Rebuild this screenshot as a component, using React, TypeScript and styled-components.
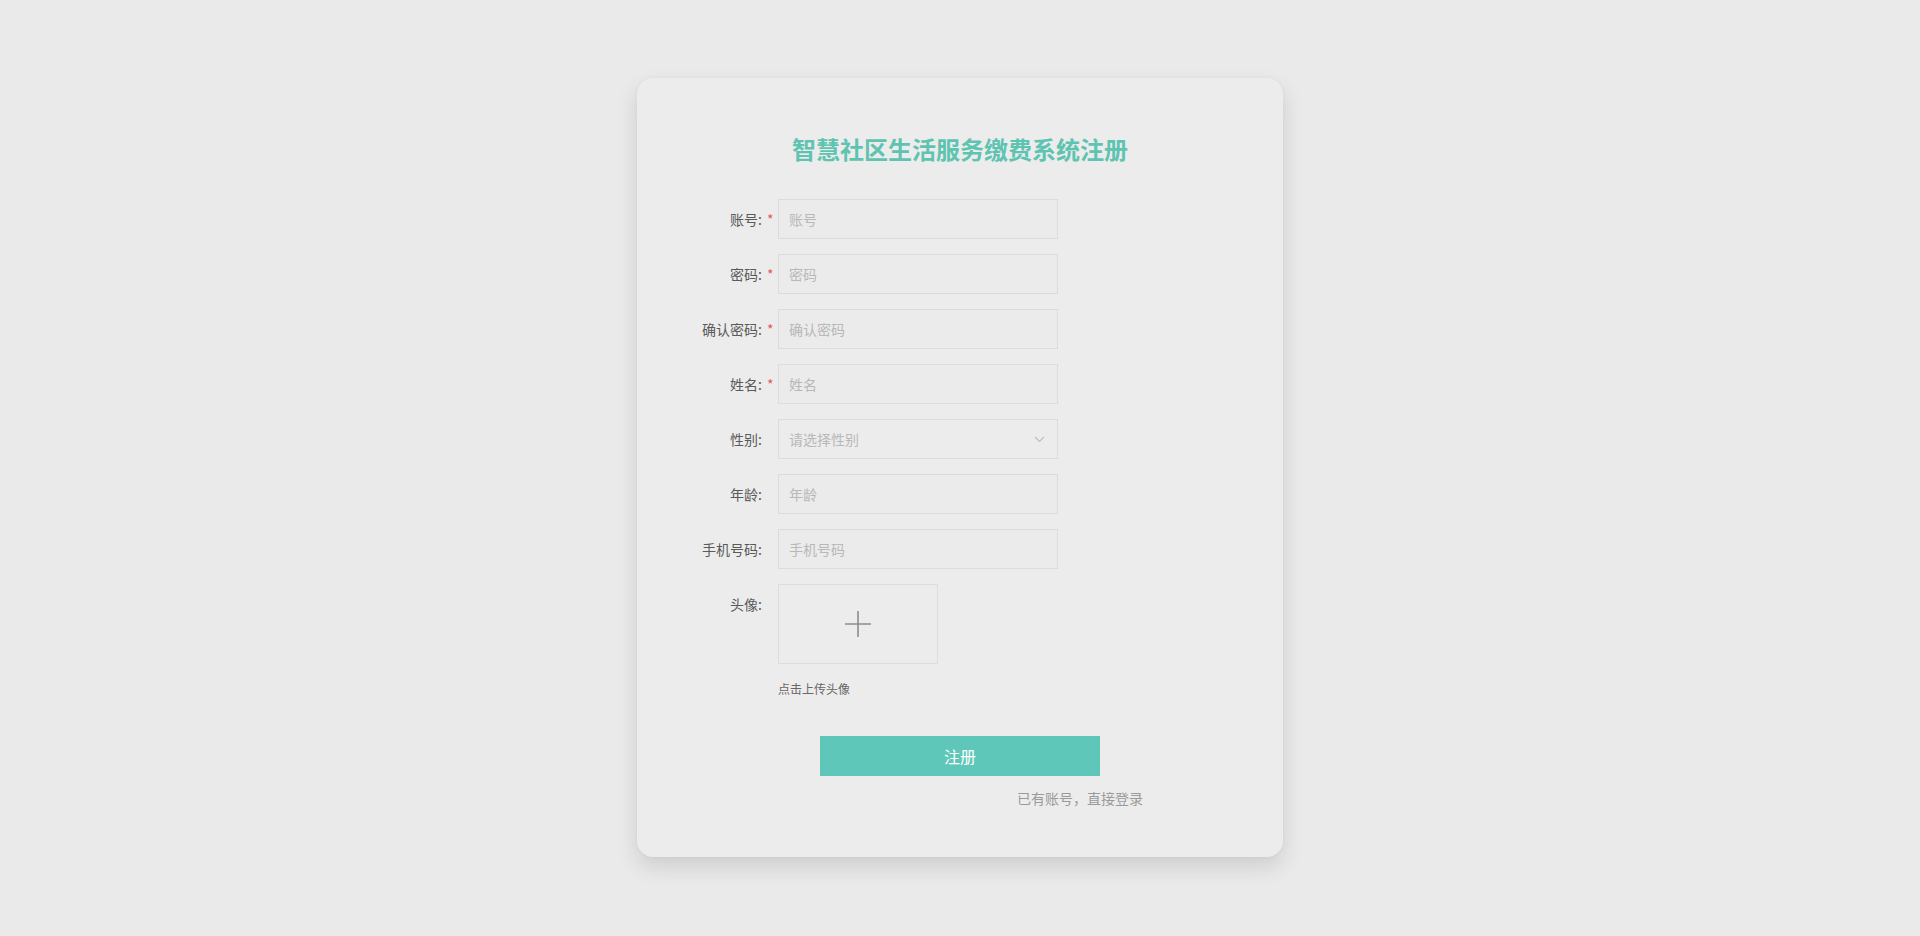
import styled, { createGlobalStyle } from 'styled-components';

const GlobalStyle = createGlobalStyle`
  html, body {
    margin: 0;
    padding: 0;
    background: #eaeaea;
    font-family: 'Noto Sans CJK SC', 'Noto Sans', sans-serif;
  }
`;

const Page = styled.div`
  min-height: 936px;
  display: flex;
  justify-content: center;
  align-items: flex-start;
  padding-top: 78px;
  box-sizing: border-box;
`;

const Card = styled.div`
  width: 646px;
  box-sizing: border-box;
  background: #ececec;
  border-radius: 16px;
  box-shadow: 0 10px 22px rgba(0, 0, 0, 0.12), 0 0 4px rgba(0, 0, 0, 0.04);
  padding: 53px 0 49px;
  display: flex;
  flex-direction: column;
`;

const Title = styled.h1`
  margin: 0 0 32px;
  text-align: center;
  font-size: 24px;
  line-height: 36px;
  font-weight: 700;
  color: #5ec4b1;
`;

const Row = styled.div<{ tall?: boolean }>`
  display: flex;
  align-items: flex-start;
  margin-bottom: ${(p) => (p.tall ? '0' : '15px')};
`;

const Label = styled.label`
  width: 141px;
  height: 40px;
  flex-shrink: 0;
  box-sizing: border-box;
  padding-right: 2px;
  display: flex;
  align-items: center;
  justify-content: flex-end;
  font-size: 14px;
  color: #5a5a5a;
`;

const Star = styled.span`
  width: 14px;
  box-sizing: border-box;
  padding-left: 5px;
  color: #e05a5a;
  font-size: 14px;
`;

const Input = styled.input`
  width: 280px;
  height: 40px;
  box-sizing: border-box;
  border: 1px solid #dcdcdc;
  background: #ebebeb;
  padding: 0 10px;
  font-family: inherit;
  font-size: 14px;
  color: #333;
  outline: none;

  &::placeholder {
    color: #b8b8b8;
  }
`;

const SelectBox = styled.div`
  width: 280px;
  height: 40px;
  box-sizing: border-box;
  border: 1px solid #dcdcdc;
  padding: 0 12px 0 10px;
  display: flex;
  align-items: center;
  justify-content: space-between;
  font-size: 14px;
  color: #b8b8b8;
  cursor: pointer;
`;

const Upload = styled.div`
  width: 160px;
  height: 80px;
  box-sizing: border-box;
  border: 1px solid #dcdcdc;
  display: flex;
  align-items: center;
  justify-content: center;
  cursor: pointer;
`;

const Hint = styled.div`
  margin: 16px 0 0 141px;
  font-size: 12px;
  line-height: 17px;
  color: #666;
`;

const Submit = styled.button`
  align-self: center;
  margin-top: 39px;
  width: 280px;
  height: 40px;
  border: none;
  background: #5ec7b9;
  color: #fff;
  font-family: inherit;
  font-size: 16px;
  cursor: pointer;
`;

const LoginLink = styled.a`
  align-self: flex-end;
  margin: 12px 140px 0 0;
  font-size: 14px;
  line-height: 20px;
  color: #9a9a9a;
  cursor: pointer;
`;

const fields = [
  { label: '账号', required: true, placeholder: '账号', type: 'text' },
  { label: '密码', required: true, placeholder: '密码', type: 'password' },
  { label: '确认密码', required: true, placeholder: '确认密码', type: 'password' },
  { label: '姓名', required: true, placeholder: '姓名', type: 'text' },
];

const App = () => {
  return (
    <>
      <GlobalStyle />
      <Page>
        <Card>
          <Title>智慧社区生活服务缴费系统注册</Title>
          {fields.map((f) => (
            <Row key={f.label}>
              <Label>
                {f.label}:<Star>{f.required ? '*' : ''}</Star>
              </Label>
              <Input type={f.type} placeholder={f.placeholder} />
            </Row>
          ))}
          <Row>
            <Label>
              性别:<Star />
            </Label>
            <SelectBox>
              <span>请选择性别</span>
              <svg width="11" height="7" viewBox="0 0 11 7" fill="none">
                <path d="M1 1l4.5 4.5L10 1" stroke="#bdbdbd" strokeWidth="1.1" />
              </svg>
            </SelectBox>
          </Row>
          <Row>
            <Label>
              年龄:<Star />
            </Label>
            <Input placeholder="年龄" />
          </Row>
          <Row>
            <Label>
              手机号码:<Star />
            </Label>
            <Input placeholder="手机号码" />
          </Row>
          <Row tall>
            <Label>
              头像:<Star />
            </Label>
            <Upload>
              <svg width="26" height="26" viewBox="0 0 26 26">
                <path d="M13 0v26M0 13h26" stroke="#8c8c8c" strokeWidth="1.6" />
              </svg>
            </Upload>
          </Row>
          <Hint>点击上传头像</Hint>
          <Submit>注册</Submit>
          <LoginLink>已有账号，直接登录</LoginLink>
        </Card>
      </Page>
    </>
  );
};

export default App;
